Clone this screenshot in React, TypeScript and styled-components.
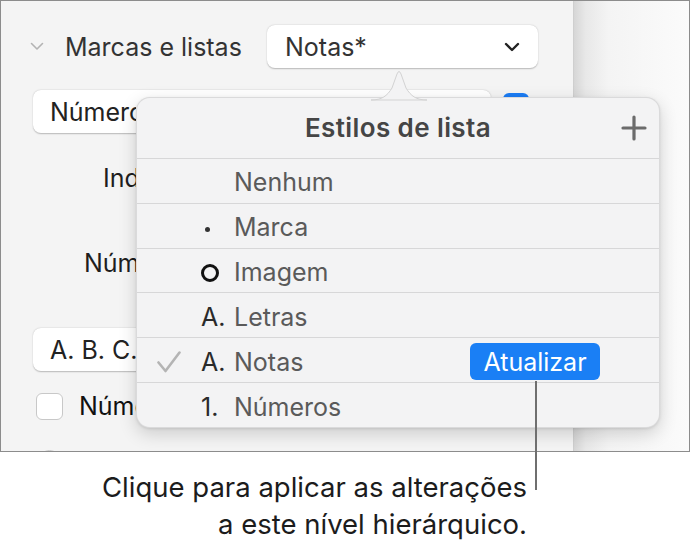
import styled, { createGlobalStyle } from 'styled-components'

const GlobalStyle = createGlobalStyle`
  body {
    margin: 0;
    background: #ffffff;
    font-family: Inter, "Liberation Sans", sans-serif;
    -webkit-font-smoothing: antialiased;
  }
`

interface ListStyle {
  name: string
  prefix?: 'bullet' | 'ring' | string
  current?: boolean
}

const styles: ListStyle[] = [
  { name: 'Nenhum' },
  { name: 'Marca', prefix: 'bullet' },
  { name: 'Imagem', prefix: 'ring' },
  { name: 'Letras', prefix: 'A.' },
  { name: 'Notas', prefix: 'A.', current: true },
  { name: 'Números', prefix: '1.' },
]

function Prefix({ value }: { value?: string }) {
  if (!value) return <PrefixCell />
  if (value === 'bullet') return <PrefixCell><Bullet /></PrefixCell>
  if (value === 'ring') return <PrefixCell><Ring /></PrefixCell>
  return <PrefixCell>{value}</PrefixCell>
}

function App() {
  return (
    <Page>
      <GlobalStyle />
      <Frame>
        <Sidebar>
          <SectionHeader>
            <svg width="14" height="9" viewBox="0 0 14 9">
              <path d="M1.5 1.5 L7 7 L12.5 1.5" fill="none" stroke="#b3b3b3" strokeWidth="1.6" strokeLinecap="round" strokeLinejoin="round" />
            </svg>
            <SectionTitle>Marcas e listas</SectionTitle>
            <Dropdown>
              <span>Notas*</span>
              <svg width="16" height="10" viewBox="0 0 16 10">
                <path d="M2 2 L8 8 L14 2" fill="none" stroke="#222" strokeWidth="2.4" strokeLinecap="round" strokeLinejoin="round" />
              </svg>
            </Dropdown>
          </SectionHeader>

          <ControlRow>
            <PopupButton $width={458}>
              <Clipped $width={86}>Números</Clipped>
            </PopupButton>
            <BlueBox />
          </ControlRow>

          <FieldLabel $indent={102} $gap={31}>Indentação:</FieldLabel>
          <FieldLabel $indent={83} $gap={57}>Número:</FieldLabel>

          <ControlRow $gap={51}>
            <PopupButton $width={300}>
              <Clipped $width={86}>A. B. C. D.</Clipped>
            </PopupButton>
          </ControlRow>

          <CheckRow>
            <CheckBox />
            <CheckLabel>Números em camadas</CheckLabel>
          </CheckRow>

          <Radio />
        </Sidebar>
        <Canvas />

        <Popover>
          <Arrow width="56" height="30" viewBox="0 0 56 30">
            <path d="M0 30 C11 30 16 26 21 18 L26 4 Q28 -1 30 4 L35 18 C40 26 45 30 56 30 Z" fill="#f3f3f4" stroke="#d3d3d3" strokeWidth="1" />
          </Arrow>
          <PopoverHeader>
            <PopoverTitle>Estilos de lista</PopoverTitle>
            <AddButton>
              <svg width="26" height="26" viewBox="0 0 26 26">
                <path d="M13 2 V24 M2 13 H24" stroke="#6b6b6b" strokeWidth="3.2" strokeLinecap="round" />
              </svg>
            </AddButton>
          </PopoverHeader>
          {styles.map(s => (
            <StyleRow key={s.name}>
              <CheckCell>
                {s.current && (
                  <svg width="24" height="24" viewBox="0 0 24 24">
                    <path d="M1.5 12.5 L8.5 21 L22.5 2.5" fill="none" stroke="#b4b4b4" strokeWidth="2.6" strokeLinecap="round" strokeLinejoin="round" />
                  </svg>
                )}
              </CheckCell>
              <Prefix value={s.prefix} />
              <StyleName>{s.name}</StyleName>
              {s.current && <UpdateButton>Atualizar</UpdateButton>}
            </StyleRow>
          ))}
        </Popover>
      </Frame>

      <LeaderLine />
      <Callout>
        Clique para aplicar as alterações
        <br />
        a este nível hierárquico.
      </Callout>
    </Page>
  )
}

export default App

// Styled Components
const Page = styled.div`
  position: relative;
  width: 692px;
  height: 545px;
  overflow: hidden;
`

const Frame = styled.div`
  position: relative;
  box-sizing: border-box;
  width: 690px;
  height: 452px;
  border: 1px solid #8c8c8c;
  display: flex;
  overflow: hidden;
`

const Sidebar = styled.div`
  width: 572px;
  flex-shrink: 0;
  background: #f4f4f4;
  padding-top: 24px;
  display: flex;
  flex-direction: column;

  & > * {
    flex-shrink: 0;
  }
`

const Canvas = styled.div`
  flex: 1;
  border-left: 1px solid #cfcfcf;
  background: linear-gradient(to right, #d6d6d6 0%, #e8e8e8 10%, #f4f4f4 30%, #fbfbfb 100%);
`

const SectionHeader = styled.div`
  display: flex;
  align-items: center;
  height: 43px;
  padding: 0 35px 0 29px;
`

const SectionTitle = styled.div`
  margin-left: 21px;
  font-size: 25px;
  color: #333;
`

const Dropdown = styled.div`
  margin-left: auto;
  box-sizing: border-box;
  width: 271px;
  height: 43px;
  display: flex;
  align-items: center;
  justify-content: space-between;
  padding: 0 18px 0 18px;
  background: #fff;
  border-radius: 8px;
  box-shadow: 0 0.5px 1.5px rgba(0, 0, 0, 0.25);
  font-size: 25px;
  color: #333;
`

const ControlRow = styled.div<{ $gap?: number }>`
  display: flex;
  align-items: flex-start;
  padding-left: 32px;
  margin-top: ${p => p.$gap ?? 22}px;
`

const PopupButton = styled.div<{ $width: number }>`
  box-sizing: border-box;
  width: ${p => p.$width}px;
  height: 43px;
  display: flex;
  align-items: center;
  padding-left: 17px;
  background: #fff;
  border-radius: 8px;
  box-shadow: 0 0.5px 1.5px rgba(0, 0, 0, 0.25);
  font-size: 25px;
  color: #222;
`

const Clipped = styled.span<{ $width: number }>`
  display: block;
  max-width: ${p => p.$width}px;
  overflow: hidden;
  white-space: nowrap;
`

const BlueBox = styled.div`
  width: 26px;
  height: 26px;
  margin: 3px 0 0 12px;
  border-radius: 6px;
  background: #1b7cf4;
`

const FieldLabel = styled.div<{ $indent: number; $gap: number }>`
  margin-top: ${p => p.$gap}px;
  margin-left: ${p => p.$indent}px;
  width: ${p => 136 - p.$indent}px;
  overflow: hidden;
  white-space: nowrap;
  height: 28px;
  line-height: 28px;
  font-size: 25px;
  color: #1e1e1e;
`

const CheckRow = styled.div`
  display: flex;
  align-items: center;
  margin-top: 20px;
  padding-left: 35px;
`

const CheckBox = styled.div`
  box-sizing: border-box;
  width: 27px;
  height: 27px;
  border-radius: 6px;
  background: #fff;
  border: 1px solid #c8c8c8;
`

const CheckLabel = styled.div`
  margin-left: 16px;
  width: 58px;
  overflow: hidden;
  white-space: nowrap;
  font-size: 25px;
  color: #111;
`

const Radio = styled.div`
  box-sizing: border-box;
  margin: 29px 0 0 38px;
  width: 21px;
  height: 21px;
  border-radius: 50%;
  background: #fff;
  border: 1px solid #c4c4c4;
`

const Popover = styled.div`
  position: absolute;
  left: 135px;
  top: 96px;
  width: 524px;
  height: 331px;
  box-sizing: border-box;
  background: #f3f3f4;
  border-radius: 14px;
  border: 1px solid rgba(0, 0, 0, 0.1);
  box-shadow: 0 6px 18px rgba(0, 0, 0, 0.16), 0 1px 3px rgba(0, 0, 0, 0.1);
  display: flex;
  flex-direction: column;
`

const Arrow = styled.svg`
  position: absolute;
  left: 234px;
  top: -28px;
  overflow: visible;
`

const PopoverHeader = styled.div`
  position: relative;
  height: 60px;
  display: flex;
  align-items: center;
  justify-content: center;
`

const PopoverTitle = styled.div`
  font-size: 26px;
  font-weight: 600;
  letter-spacing: 0.4px;
  color: #454545;
`

const AddButton = styled.div`
  position: absolute;
  right: 12px;
  top: 17px;
  display: flex;
`

const StyleRow = styled.div`
  height: 45px;
  box-sizing: border-box;
  border-top: 1px solid #d7d7d8;
  display: flex;
  align-items: center;
  padding-top: 3px;
`

const CheckCell = styled.div`
  width: 64px;
  box-sizing: border-box;
  padding-left: 20px;
  display: flex;
  align-items: center;
`

const PrefixCell = styled.div`
  width: 33px;
  font-size: 25px;
  color: #2a2a2a;
  display: flex;
  align-items: center;
`

const Bullet = styled.span`
  width: 5px;
  height: 5px;
  margin: 4px 0 0 4px;
  border-radius: 50%;
  background: #333;
`

const Ring = styled.span`
  box-sizing: border-box;
  width: 18px;
  height: 18px;
  margin-top: 2px;
  border-radius: 50%;
  border: 3px solid #111;
`

const StyleName = styled.div`
  font-size: 25px;
  color: #5a5a5a;
`

const UpdateButton = styled.div`
  margin: 0 59px 0 auto;
  width: 130px;
  height: 37px;
  border-radius: 6px;
  background: #1a7ff5;
  color: #fff;
  font-size: 25px;
  display: flex;
  align-items: center;
  justify-content: center;
`

const LeaderLine = styled.div`
  position: absolute;
  left: 535px;
  top: 381px;
  width: 1.5px;
  height: 109px;
  background: #6f6f6f;
`

const Callout = styled.div`
  width: 527px;
  margin-top: 17px;
  text-align: right;
  font-size: 27.5px;
  line-height: 37px;
  color: #1c1c1c;
`
